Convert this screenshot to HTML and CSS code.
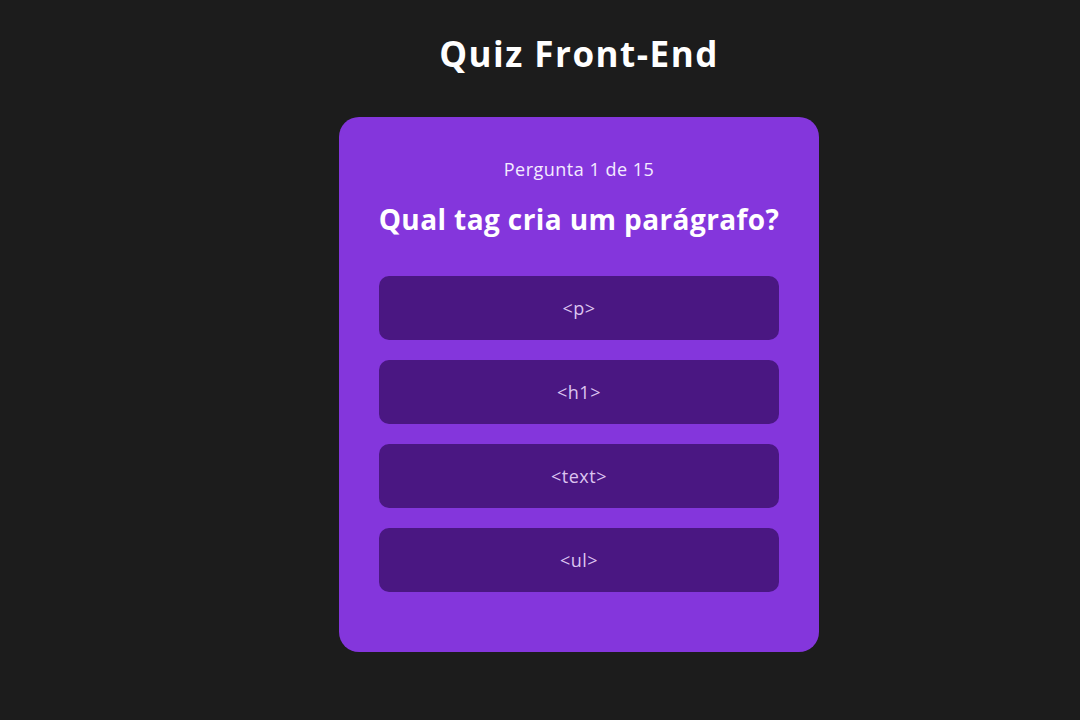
FILE: index.html
```html
<!DOCTYPE html>
<html lang="pt-BR">
<head>
<meta charset="utf-8">
<title>Quiz Front-End</title>
<link rel="stylesheet" href="styles.css">
</head>
<body>
  <main class="page">
    <h1 class="title">Quiz Front-End</h1>
    <section class="card">
      <p class="progress">Pergunta 1 de 15</p>
      <h2 class="question">Qual tag cria um parágrafo?</h2>
      <div class="answers">
        <button class="answer">&lt;p&gt;</button>
        <button class="answer">&lt;h1&gt;</button>
        <button class="answer">&lt;text&gt;</button>
        <button class="answer">&lt;ul&gt;</button>
      </div>
    </section>
  </main>
</body>
</html>
```

FILE: styles.css
```css
html, body {
  margin: 0;
  padding: 0;
  background: #1c1c1c;
  font-family: "Open Sans", "Lato", sans-serif;
  color: #ffffff;
}

.page {
  display: flex;
  flex-direction: column;
  align-items: center;
  padding-top: 32px;
  padding-left: 78px;
}

.title {
  margin: 0 0 42px;
  font-size: 35px;
  line-height: 43px;
  font-weight: 700;
  letter-spacing: 1.5px;
  color: #ffffff;
}

.card {
  width: 480px;
  box-sizing: border-box;
  padding: 40px 40px 40px;
  background: #8436dc;
  border-radius: 20px;
  display: flex;
  flex-direction: column;
  align-items: center;
}

.progress {
  margin: 0;
  font-size: 18px;
  line-height: 24px;
  letter-spacing: 0.5px;
  color: #f4ecff;
}

.question {
  margin: 21px 0 40px;
  font-size: 28px;
  line-height: 34px;
  font-weight: 700;
  letter-spacing: 0.4px;
  color: #ffffff;
  white-space: nowrap;
}

.answers {
  width: 100%;
  display: flex;
  flex-direction: column;
  gap: 20px;
  padding-bottom: 20px;
}

.answer {
  height: 64px;
  width: 100%;
  border: none;
  border-radius: 10px;
  background: #4a1782;
  color: #dcc4f0;
  font-family: "Open Sans", "Lato", sans-serif;
  font-size: 18px;
  letter-spacing: 0.5px;
  cursor: pointer;
}
```
